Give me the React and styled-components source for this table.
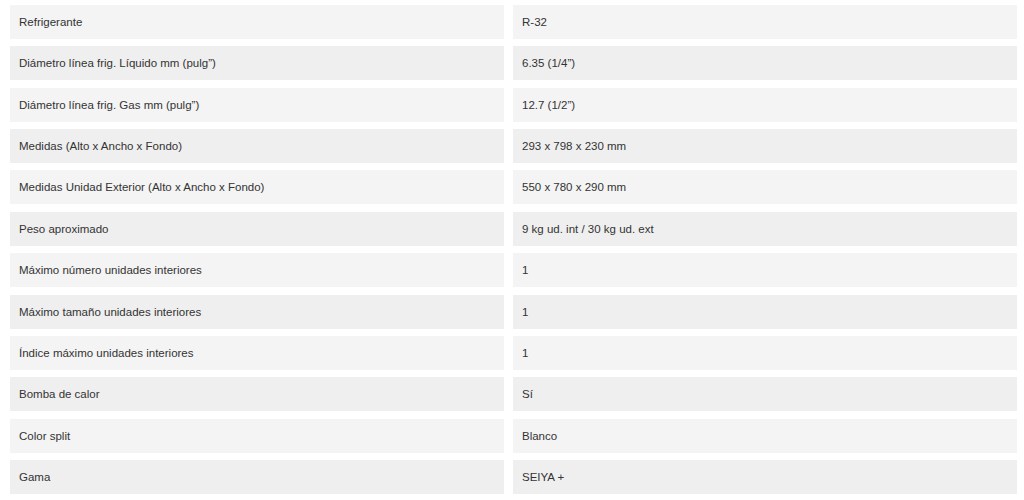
import React from 'react';
import styled, { createGlobalStyle } from 'styled-components';

const specs = [
  ['Refrigerante', 'R-32'],
  ['Diámetro línea frig. Líquido mm (pulg”)', '6.35 (1/4”)'],
  ['Diámetro línea frig. Gas mm (pulg”)', '12.7 (1/2”)'],
  ['Medidas (Alto x Ancho x Fondo)', '293 x 798 x 230 mm'],
  ['Medidas Unidad Exterior (Alto x Ancho x Fondo)', '550 x 780 x 290 mm'],
  ['Peso aproximado', '9 kg ud. int / 30 kg ud. ext'],
  ['Máximo número unidades interiores', '1'],
  ['Máximo tamaño unidades interiores', '1'],
  ['Índice máximo unidades interiores', '1'],
  ['Bomba de calor', 'Sí'],
  ['Color split', 'Blanco'],
  ['Gama', 'SEIYA +'],
];

const GlobalStyle = createGlobalStyle`
  body {
    margin: 0;
    background: #fff;
    font-family: "Liberation Sans", Arial, sans-serif;
  }
`;

export default function App() {
  return (
    <>
      <GlobalStyle />
      <SpecTable>
        {specs.map(([label, value], i) => (
          <SpecRow key={ i } $odd={ i % 2 === 1 }>
            <SpecCell>{ label }</SpecCell>
            <SpecCell>{ value }</SpecCell>
          </SpecRow>
        ))}
      </SpecTable>
    </>
  );
}

const SpecTable = styled.div`
  display: grid;
  grid-template-columns: 494px 504px;
  grid-auto-rows: 34px;
  column-gap: 9px;
  row-gap: 7.36px;
  padding: 5px 0 0 10px;
`;

const SpecRow = styled.div`
  display: contents;
  color: #333;
  font-size: 11.5px;

  & > div {
    background: ${props => props.$odd ? '#efefef' : '#f4f4f4'};
  }
`;

const SpecCell = styled.div`
  display: flex;
  align-items: center;
  padding: 0 9px;
`;
